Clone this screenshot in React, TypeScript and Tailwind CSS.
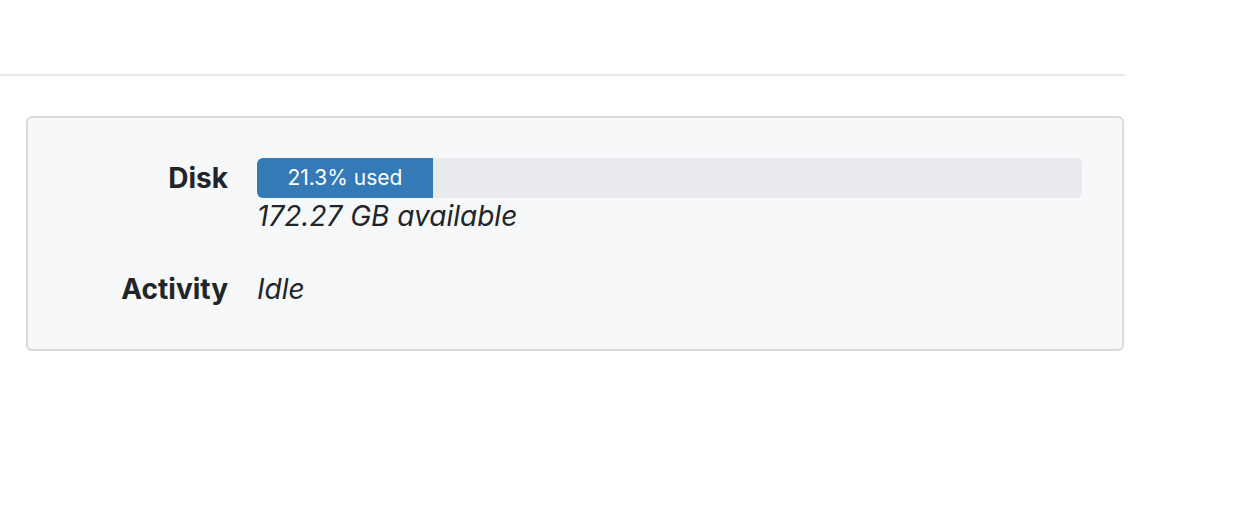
export default function App() {
  return (
    <div className="w-[1238px] h-[508px] bg-white text-[#212529]" style={{ fontFamily: 'Inter, "Liberation Sans", sans-serif' }}>
      <div className="h-[74px]" />
      <div className="w-[1125px] h-[2px] bg-[#e9e9ea]" />
      <div className="pl-[26px] pt-[40px]">
        <div className="w-[1098px] rounded-[6px] border-2 border-[#d9dadc] bg-[#f7f8fa] pt-[40px] pb-[42px] pr-[40px]">
          <div className="grid grid-cols-[200px_1fr] gap-x-[29px] gap-y-[36px]">
            <div className="text-right font-bold text-[28px] leading-[40px]">Disk</div>
            <div>
              <div className="h-[40px] w-full rounded-[6px] bg-[#e8eaed] overflow-hidden flex">
                <div className="h-full bg-[#337ab7] text-white text-[21px] flex items-center justify-center" style={{ width: '21.3%' }}>
                  21.3% used
                </div>
              </div>
              <div className="italic text-[28px] leading-[37px]">172.27 GB available</div>
            </div>
            <div className="text-right font-bold text-[28px] leading-[36px]">Activity</div>
            <div className="italic text-[28px] leading-[36px]">Idle</div>
          </div>
        </div>
      </div>
    </div>
  );
}
